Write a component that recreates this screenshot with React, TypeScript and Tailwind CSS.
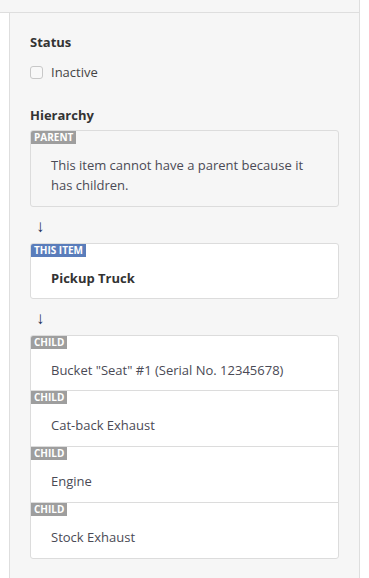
import React from "react";

type Tag = "PARENT" | "THIS ITEM" | "CHILD";

const CHILDREN = [
  'Bucket "Seat" #1 (Serial No. 12345678)',
  "Cat-back Exhaust",
  "Engine",
  "Stock Exhaust",
];

function Badge({ tag }: { tag: Tag }) {
  const color = tag === "THIS ITEM" ? "bg-[#5a7dbb]" : "bg-[#9e9e9e]";
  return (
    <span
      className={`${color} inline-block h-[13px] px-[3px] text-[10px] font-bold leading-[13px] text-white`}
    >
      {tag}
    </span>
  );
}

function Node({
  tag,
  children,
  bold,
  bottom = "pb-[11px]",
}: {
  tag: Tag;
  children: React.ReactNode;
  bold?: boolean;
  bottom?: string;
}) {
  return (
    <div className="flex flex-col items-start">
      <Badge tag={tag} />
      <div
        className={`pt-[11px] ${bottom} pl-[20px] pr-[20px] text-[13px] leading-[20px] ${
          bold ? "font-bold text-[#333]" : "text-[#4a4a55]"
        }`}
      >
        {children}
      </div>
    </div>
  );
}

function Arrow() {
  return (
    <div className="flex h-[36px] items-center pl-[6px] text-[17px] leading-none text-[#1c2f55]">
      ↓
    </div>
  );
}

export default function App() {
  return (
    <div
      className="h-[578px] w-[369px] overflow-hidden bg-white"
      style={{ fontFamily: '"Open Sans", "Noto Sans", sans-serif' }}
    >
      <div className="flex h-full w-[360px] flex-col border-r border-[#dedede]">
        <div className="h-[13px] shrink-0 border-b border-[#dedede] bg-[#f6f6f6]" />
        <div className="flex flex-1">
          <div className="w-[9px] shrink-0 bg-white" />
          <div className="flex-1 border-l border-[#dedede] bg-[#f6f6f6] pl-[20px] pr-[20px] pt-[20px]">
            <div className="text-[13px] font-bold leading-[18px] text-[#333]">Status</div>
            <label className="mt-[12px] flex items-center gap-[8px]">
              <span className="h-[13px] w-[13px] rounded-[3px] border border-[#c8c8c8] bg-[#f8f8f8]" />
              <span className="text-[13px] leading-[18px] text-[#444]">Inactive</span>
            </label>
            <div className="mt-[25px] text-[13px] font-bold leading-[18px] text-[#333]">Hierarchy</div>

            <div className="mt-[6px] overflow-hidden rounded-[3px] border border-[#dcdcdc] bg-[#f6f6f6]">
              <Node tag="PARENT">
                This item cannot have a parent because it has children.
              </Node>
            </div>

            <Arrow />

            <div className="overflow-hidden rounded-[3px] border border-[#dcdcdc] bg-white">
              <Node tag="THIS ITEM" bold bottom="pb-[10px]">
                Pickup Truck
              </Node>
            </div>

            <Arrow />

            <div className="overflow-hidden rounded-[3px] border border-[#dcdcdc] bg-white">
              {CHILDREN.map((name, index) => (
                <div key={name} className={index > 0 ? "border-t border-[#dcdcdc]" : ""}>
                  <Node tag="CHILD" bottom={index === 0 ? "pb-[10px]" : "pb-[11px]"}>
                    {name}
                  </Node>
                </div>
              ))}
            </div>
          </div>
        </div>
      </div>
    </div>
  );
}
